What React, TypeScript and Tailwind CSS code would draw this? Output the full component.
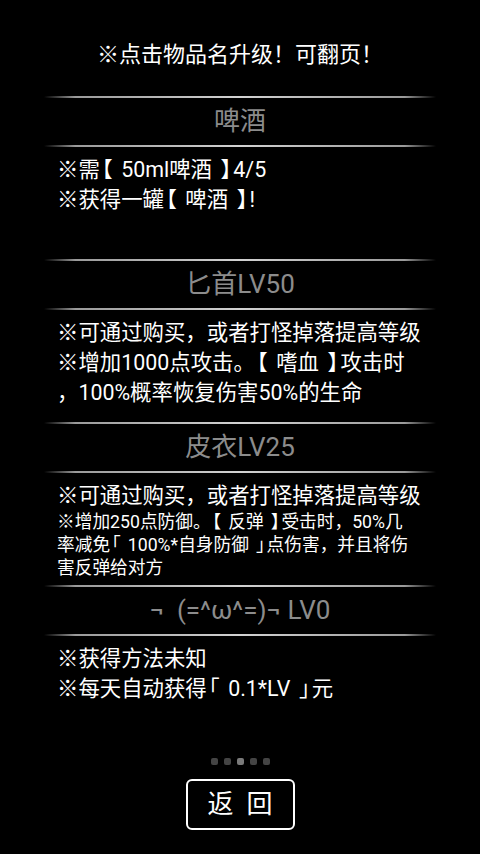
import React from 'react';

type Item = {
    title: string;
    lines: { text: string; small?: boolean }[];
};

const items: Item[] = [
    {
        title: '啤酒',
        lines: [{ text: '※需【50ml啤酒】4/5' }, { text: '※获得一罐【啤酒】!' }],
    },
    {
        title: '匕首LV50',
        lines: [
            { text: '※可通过购买，或者打怪掉落提高等级' },
            { text: '※增加1000点攻击。【嗜血】攻击时' },
            { text: '，100%概率恢复伤害50%的生命' },
        ],
    },
    {
        title: '皮衣LV25',
        lines: [
            { text: '※可通过购买，或者打怪掉落提高等级' },
            { text: '※增加250点防御。【反弹】受击时，50%几', small: true },
            { text: '率减免「100%*自身防御」点伤害，并且将伤', small: true },
            { text: '害反弹给对方', small: true },
        ],
    },
    {
        title: '¬\u00a0\u00a0(=^ω^=)¬ LV0',
        lines: [{ text: '※获得方法未知' }, { text: '※每天自动获得「0.1*LV」元' }],
    },
];

// brackets in the original font sit near the middle of their box:
// use the half-width glyph and pad it back to a full em
const withBrackets = (text: string) =>
    text.split(/([【】「」])/).map((part, i) => {
        if (part === '【' || part === '「') {
            return (
                <span key={i} className="[font-feature-settings:'halt'] pl-[0.1em] pr-[0.4em]">
                    {part}
                </span>
            );
        }
        if (part === '】' || part === '」') {
            return (
                <span key={i} className="[font-feature-settings:'halt'] pl-[0.4em] pr-[0.1em]">
                    {part}
                </span>
            );
        }
        return <React.Fragment key={i}>{part}</React.Fragment>;
    });

const Divider = () => (
    <div className="mx-[44px] h-[2px] bg-[linear-gradient(90deg,transparent,#9a9a9a_8%,#d2d2d2_50%,#9a9a9a_92%,transparent)]" />
);

const Section: React.FC<{ item: Item }> = ({ item }) => (
    <div className="h-[163px]">
        <Divider />
        <div className="h-[47px] flex items-center justify-center text-[26px] text-[#8c8c8c]">
            {item.title}
        </div>
        <Divider />
        <div className="pl-[57px] pt-[8px] text-white">
            {item.lines.map((l, i) => (
                <div
                    key={i}
                    className={l.small ? 'text-[17.7px] leading-[23px]' : 'text-[21.4px] leading-[30px]'}
                >
                    {withBrackets(l.text)}
                </div>
            ))}
        </div>
    </div>
);

export default function App() {
    return (
        <div className="w-[480px] h-[854px] bg-black text-white overflow-hidden flex flex-col font-['Roboto','Noto_Sans_CJK_SC',sans-serif]">
            <div className="pt-[40px] text-center text-[22px] leading-[30px]">※点击物品名升级！可翻页！</div>

            <div className="mt-[26px]">
                {items.map((item, i) => (
                    <Section key={i} item={item} />
                ))}
            </div>

            <div className="mt-[10px] flex justify-center gap-[6px]">
                {[0, 1, 2, 3, 4].map((d) => (
                    <span
                        key={d}
                        className={`w-[7px] h-[7px] rounded-[2px] ${d === 2 ? 'bg-[#7a7a7a]' : 'bg-[#444]'}`}
                    />
                ))}
            </div>

            <div className="mt-[14px] flex justify-center">
                <button className="w-[109px] h-[51px] border-2 border-white rounded-[6px] flex items-center justify-center gap-[13px] text-[26px] text-white">
                    <span>返</span>
                    <span>回</span>
                </button>
            </div>
        </div>
    );
}
